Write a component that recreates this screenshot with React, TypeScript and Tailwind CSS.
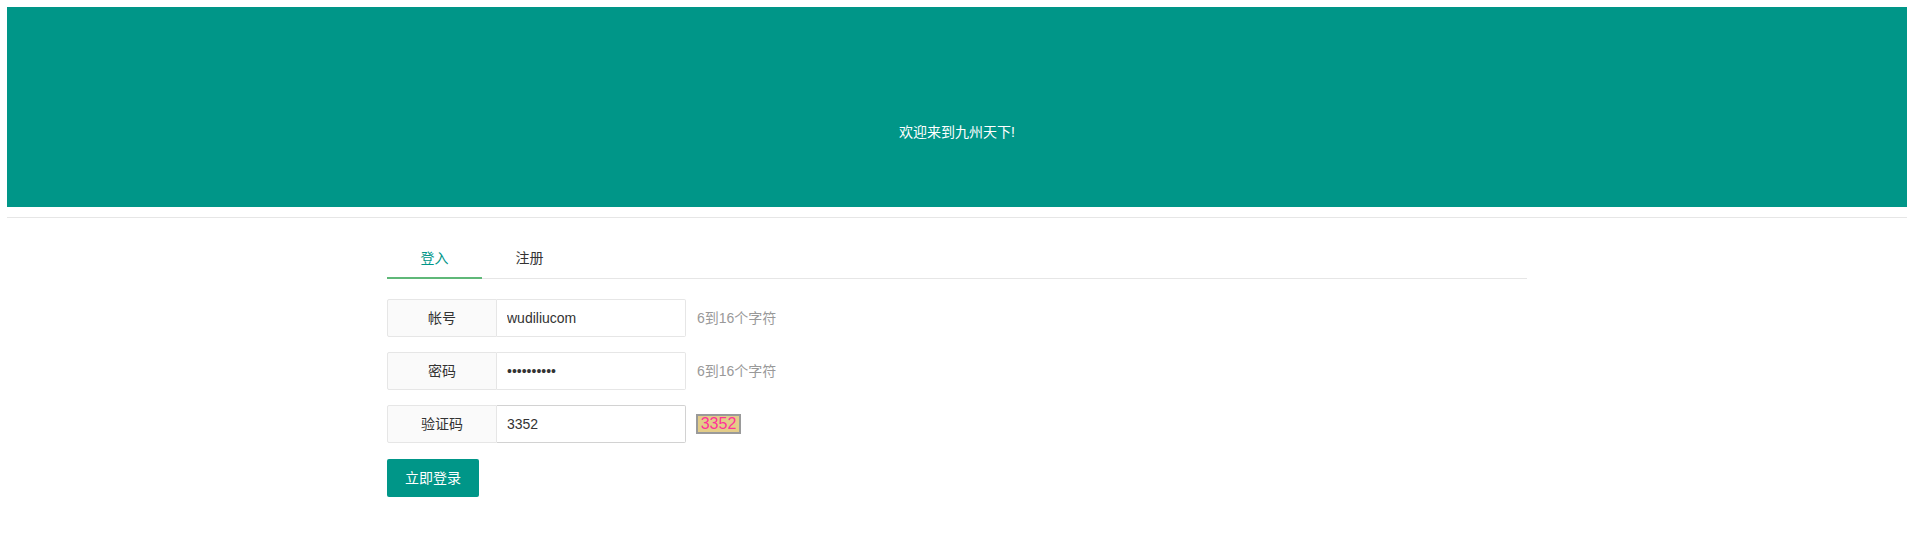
import React, { useState } from 'react';

const font = "font-['Liberation_Sans','Noto_Sans_CJK_SC',sans-serif]";

type Field = { label: string; name: string; type: string; hint?: string };

const fields: Field[] = [
    { label: '帐号', name: 'username', type: 'text', hint: '6到16个字符' },
    { label: '密码', name: 'password', type: 'password', hint: '6到16个字符' },
    { label: '验证码', name: 'captcha', type: 'text' },
];

const App: React.FC = () => {
    const [tab, setTab] = useState<'login' | 'signup'>('login');
    const [values, setValues] = useState<Record<string, string>>({
        username: 'wudiliucom',
        password: '1234567890',
        captcha: '3352',
    });

    const handleChange = (e: React.ChangeEvent<HTMLInputElement>) => {
        const { name, value } = e.target;
        setValues({ ...values, [name]: value });
    };

    return (
        <div className={`${font} min-h-[554px] bg-white pt-[7px] text-[14px] text-[#333]`}>
            <div className="ml-[7px] w-[1900px]">
                {/* banner */}
                <div className="flex h-[200px] justify-center bg-[#009688] pt-[115px] text-white">
                    <span className="leading-[20px]">欢迎来到九州天下!</span>
                </div>
                <hr className="mt-[10px] border-0 border-t border-[#e6e6e6]" />

                <div className="mx-auto mt-[20px] w-[1140px]">
                    {/* tabs */}
                    <div className="flex h-[41px] border-b border-[#e6e6e6]">
                        <button
                            type="button"
                            onClick={() => setTab('login')}
                            className={`relative h-[40px] w-[95px] ${tab === 'login' ? 'text-[#009688]' : 'text-[#333]'}`}
                        >
                            登入
                            {tab === 'login' && <span className="absolute bottom-[-1px] left-0 h-[2px] w-full bg-[#5FB878]" />}
                        </button>
                        <button
                            type="button"
                            onClick={() => setTab('signup')}
                            className={`relative h-[40px] w-[95px] ${tab === 'signup' ? 'text-[#009688]' : 'text-[#333]'}`}
                        >
                            注册
                            {tab === 'signup' && <span className="absolute bottom-[-1px] left-0 h-[2px] w-full bg-[#5FB878]" />}
                        </button>
                    </div>

                    {/* form */}
                    <form className="pt-[20px]" onSubmit={(e) => e.preventDefault()}>
                        {fields.map((f) => (
                            <div key={f.name} className="mb-[15px] flex h-[38px] items-center">
                                <label
                                    htmlFor={f.name}
                                    className="flex h-[38px] w-[110px] items-center justify-center rounded-l-[2px] border border-[#e6e6e6] bg-[#FAFAFA] text-[#333]"
                                >
                                    {f.label}
                                </label>
                                <input
                                    id={f.name}
                                    name={f.name}
                                    type={f.type}
                                    value={values[f.name]}
                                    onChange={handleChange}
                                    className={`h-[38px] w-[189px] rounded-r-[2px] border border-l-0 bg-white pl-[10px] text-[14px] text-[#333] outline-none ${
                                        f.name === 'captcha' ? 'border-[#D2D2D2]' : 'border-[#e6e6e6]'
                                    }`}
                                />
                                {f.hint && <span className="ml-[11px] text-[#999]">{f.hint}</span>}
                                {f.name === 'captcha' && (
                                    <span className="ml-[10px] flex h-[20px] w-[45px] items-center justify-center border-2 border-[#9a9a9a] bg-[#E3CC88] text-[16px] leading-none text-[#FF3399]">
                                        3352
                                    </span>
                                )}
                            </div>
                        ))}
                        <button
                            type="submit"
                            className="mt-[1px] h-[38px] w-[92px] rounded-[2px] bg-[#009688] text-white"
                        >
                            立即登录
                        </button>
                    </form>
                </div>
            </div>
        </div>
    );
};

export default App;
